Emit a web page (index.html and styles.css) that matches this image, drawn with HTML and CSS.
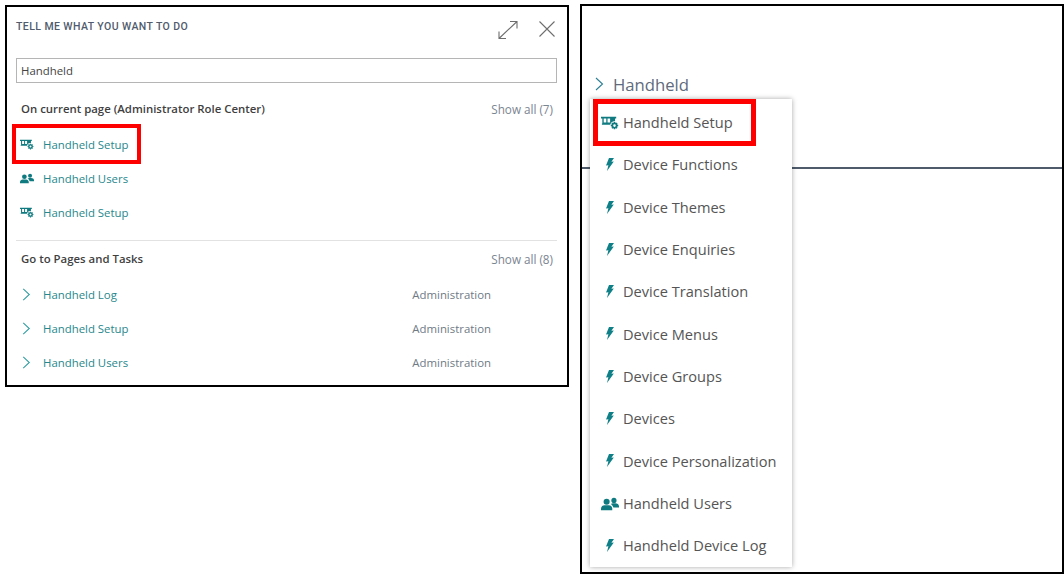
FILE: index.html
```html
<!DOCTYPE html>
<html lang="en">
<head>
<meta charset="utf-8">
<title>Tell me what you want to do</title>
<link rel="stylesheet" href="styles.css">
</head>
<body>
<svg class="defs" width="0" height="0" aria-hidden="true">
  <defs>
    <symbol id="setup" viewBox="0 0 16 12">
      <path d="M0 .5h13.500v1.600H12.500V6.500H13V7.500H.8V6.500h.4V2.100H0zM2.400 2.100V5.500h2.300V2.100zM5.800 2.100V5.500h2.300V2.100z" fill="currentColor" fill-rule="evenodd"/>
      <circle cx="12" cy="8.300" r="3.900" fill="#fff"/>
      <circle cx="12" cy="8.300" r="1.900" fill="none" stroke="currentColor" stroke-width="1.500"/>
      <path d="M12 5v1.300M12 10.300v1.300M8.700 8.300H10M14 8.300h1.300M9.700 6l.9.900M13.400 9.700l.9.900M14.300 6l-.9.900M10.600 9.700l-.9.900" stroke="currentColor" stroke-width="1.300"/>
    </symbol>
    <symbol id="users" viewBox="0 0 16 12">
      <circle cx="5" cy="4" r="2.700" fill="currentColor"/>
      <path d="M0 11.500V10c0-2 1.700-3 3-3h4c1.400 0 3 1 3 3v1.500z" fill="currentColor"/>
      <circle cx="11.500" cy="2.800" r="2.300" fill="currentColor"/>
      <path d="M8.700 6c.6-.5 1.300-.7 2-.7h2c1.700 0 3.300 1 3.300 2.700v1.200h-5c-.3-1.200-1.100-2.400-2.300-3.200z" fill="currentColor"/>
    </symbol>
    <symbol id="bolt" viewBox="0 0 8 13">
      <path d="M3 0h5L5.400 3.800 7.800 3.600 1 13 2.400 7.300 0 7.500z" fill="currentColor"/>
    </symbol>
    <symbol id="chev" viewBox="0 0 9 14">
      <path d="M1 1l6.500 6L1 13" fill="none" stroke="currentColor" stroke-width="1.100"/>
    </symbol>
  </defs>
</svg>

<div class="page">
  <section class="dialog">
    <header class="dialog-head">
      <h1 class="dialog-title">TELL ME WHAT YOU WANT TO DO</h1>
      <div class="dialog-tools">
        <svg class="tool" width="22" height="20" viewBox="0 0 22 20"><path d="M2 18.500L20 1.500M13 1.500h7v7M2 11.500v7h7" fill="none" stroke="#6e6e6e" stroke-width="1.100"/></svg>
        <svg class="tool" width="18" height="18" viewBox="0 0 18 18"><path d="M1.500 1.500l15 15M16.500 1.500l-15 15" fill="none" stroke="#6e6e6e" stroke-width="1.100"/></svg>
      </div>
    </header>
    <div class="search">Handheld</div>

    <div class="group-head">
      <span class="group-title">On current page (Administrator Role Center)</span>
      <span class="show-all">Show all (7)</span>
    </div>
    <ul class="rows">
      <li class="row"><svg class="row-icon"><use href="#setup"/></svg><span class="row-link">Handheld Setup</span></li>
      <li class="row"><svg class="row-icon"><use href="#users"/></svg><span class="row-link">Handheld Users</span></li>
      <li class="row"><svg class="row-icon"><use href="#setup"/></svg><span class="row-link">Handheld Setup</span></li>
    </ul>

    <hr class="divider">

    <div class="group-head group-head-second">
      <span class="group-title">Go to Pages and Tasks</span>
      <span class="show-all">Show all (8)</span>
    </div>
    <ul class="rows">
      <li class="row"><svg class="row-chev"><use href="#chev"/></svg><span class="row-link">Handheld Log</span><span class="row-dept">Administration</span></li>
      <li class="row"><svg class="row-chev"><use href="#chev"/></svg><span class="row-link">Handheld Setup</span><span class="row-dept">Administration</span></li>
      <li class="row"><svg class="row-chev"><use href="#chev"/></svg><span class="row-link">Handheld Users</span><span class="row-dept">Administration</span></li>
    </ul>
    <div class="mark mark-left"></div>
  </section>

  <section class="nav-panel">
    <div class="crumb"><svg class="crumb-chev"><use href="#chev"/></svg><span class="crumb-text">Handheld</span></div>
    <div class="nav-rule"></div>
    <ul class="menu">
      <li class="menu-item"><svg class="menu-wide"><use href="#setup"/></svg>Handheld Setup</li>
      <li class="menu-item"><svg class="menu-bolt"><use href="#bolt"/></svg>Device Functions</li>
      <li class="menu-item"><svg class="menu-bolt"><use href="#bolt"/></svg>Device Themes</li>
      <li class="menu-item"><svg class="menu-bolt"><use href="#bolt"/></svg>Device Enquiries</li>
      <li class="menu-item"><svg class="menu-bolt"><use href="#bolt"/></svg>Device Translation</li>
      <li class="menu-item"><svg class="menu-bolt"><use href="#bolt"/></svg>Device Menus</li>
      <li class="menu-item"><svg class="menu-bolt"><use href="#bolt"/></svg>Device Groups</li>
      <li class="menu-item"><svg class="menu-bolt"><use href="#bolt"/></svg>Devices</li>
      <li class="menu-item"><svg class="menu-bolt"><use href="#bolt"/></svg>Device Personalization</li>
      <li class="menu-item"><svg class="menu-wide"><use href="#users"/></svg>Handheld Users</li>
      <li class="menu-item"><svg class="menu-bolt"><use href="#bolt"/></svg>Handheld Device Log</li>
    </ul>
    <div class="mark mark-right"></div>
  </section>
</div>
</body>
</html>
```

FILE: styles.css
```css
* { box-sizing: border-box; }
html, body { margin: 0; padding: 0; background: #fff; }
body { font-family: "Open Sans", "Noto Sans", sans-serif; overflow: hidden; }
.defs { position: absolute; }
ul { list-style: none; margin: 0; padding: 0; }

.page {
  display: flex;
  align-items: flex-start;
  gap: 11px;
  padding: 5px 0 0 5px;
  width: 1064px;
  height: 577px;
}

.dialog {
  position: relative;
  flex: none;
  width: 564px;
  height: 382px;
  border: 2px solid #000;
  padding: 0 10px 0 9px;
}
.dialog-head {
  display: flex;
  justify-content: space-between;
  align-items: flex-start;
  height: 51px;
  padding-top: 13px;
}
.dialog-title {
  margin: 0;
  font: 500 10.500px/14px "Roboto", sans-serif;
  letter-spacing: .42px;
  color: #505c6d;
}
.dialog-tools { display: flex; gap: 19px; padding-right: 1px; }
.search {
  height: 25px;
  border: 1px solid #b5b5b5;
  padding-left: 4px;
  font-size: 11.400px;
  line-height: 24px;
  color: #444;
}
.group-head {
  display: flex;
  justify-content: space-between;
  align-items: center;
  height: 20px;
  margin-top: 15px;
  padding: 0 4px 0 5px;
}
.group-head-second { margin-top: 7px; }
.group-title { font-size: 11.400px; font-weight: 600; color: #3f3f3f; }
.show-all { font-size: 11.700px; line-height: 18px; padding-top: 2px; color: #7b8591; }
.group-head + .rows { margin-top: 9px; }
.row {
  display: flex;
  align-items: center;
  height: 34px;
  padding-left: 4px;
}
.row-icon { width: 14px; height: 11px; color: #0f7b80; margin-right: 9px; flex: none; }
.row-chev { width: 9px; height: 13px; color: #2f9ba0; margin: 0 12px 0 2px; flex: none; }
.row-link { font-size: 11.400px; color: #27878c; }
.row-dept { font-size: 11.400px; color: #6f7a86; margin-left: auto; margin-right: 66px; }
.divider { border: 0; border-top: 1px solid #e2e2e2; margin: 11px 0 0; }

.nav-panel {
  position: relative;
  flex: 1;
  height: 570px;
  margin-top: -1px;
  border: 2px solid #000;
}
.crumb {
  display: flex;
  align-items: center;
  height: 24px;
  margin-top: 66px;
  padding-left: 13px;
}
.crumb-chev { width: 9px; height: 14px; color: #2c7f96; margin-right: 9px; flex: none; }
.crumb-text { font-size: 16.700px; color: #5f6b7c; }
.nav-rule { height: 2px; background: #4f5b6b; margin-top: 71px; }
.menu {
  position: absolute;
  left: 8px;
  top: 93px;
  width: 202px;
  height: 468px;
  padding-top: 2px;
  background: #fff;
  box-shadow: 0 0 5px rgba(0,0,0,.35);
}
.menu-item {
  position: relative;
  display: flex;
  align-items: center;
  height: 42.300px;
  padding-left: 33px;
  font-size: 14.600px;
  color: #555;
}
.menu-wide { position: absolute; left: 11px; top: 15px; width: 18px; height: 14px; color: #0f7b80; }
.menu-bolt { position: absolute; left: 16px; top: 15px; width: 8px; height: 13px; color: #0f8087; }

.mark { position: absolute; border: 4px solid #f00; pointer-events: none; }
.mark-left { left: 5px; top: 117px; width: 129px; height: 40px; }
.mark-right { left: 11px; top: 93px; width: 163px; height: 47px; border-width: 5px; }
```
